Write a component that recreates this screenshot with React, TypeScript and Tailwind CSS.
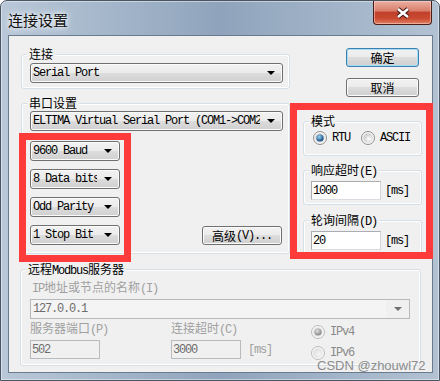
import type { ReactNode } from "react";

// SimSun-like half-width latin: 12px mono squeezed to a 6px advance
const mono = "font-['Liberation_Mono',monospace] tracking-[-1.2px]";
const btnBg = "bg-[linear-gradient(#f2f2f2,#ebebeb_49%,#dddddd_50%,#cfcfcf)]";

function Arrow({ color = "#000" }: { color?: string }) {
  return (
    <svg width="8" height="4" viewBox="0 0 8 4">
      <polygon points="0,0 8,0 4,4" fill={color} />
    </svg>
  );
}

function Combo({ text, className = "" }: { text: string; className?: string }) {
  return (
    <div
      className={`flex h-[20px] items-center rounded-[3px] border border-[#707070] ${btnBg} shadow-[inset_0_0_0_1px_#fbfbfb] ${className}`}
    >
      <div className={`min-w-0 flex-1 overflow-hidden whitespace-nowrap pl-[2px] leading-[12px] ${mono}`}>
        {text}
      </div>
      <div className="flex w-[22px] shrink-0 justify-center">
        <Arrow />
      </div>
    </div>
  );
}

function Btn({ children, def = false, className = "" }: { children: ReactNode; def?: boolean; className?: string }) {
  return (
    <button
      type="button"
      className={`flex h-[19px] items-center justify-center rounded-[3px] border leading-[12px] ${btnBg} ${
        def ? "border-[#3c7fb1] shadow-[inset_0_0_0_1px_#a6dcf6]" : "border-[#707070] shadow-[inset_0_0_0_1px_#fbfbfb]"
      } ${className}`}
    >
      {children}
    </button>
  );
}

function Input({ value, disabled = false, className = "" }: { value: string; disabled?: boolean; className?: string }) {
  return (
    <div
      className={`flex h-[19px] items-center border pl-[1px] leading-[12px] ${mono} ${
        disabled
          ? "border-[#b9bcbe] bg-[#f0f0f0] text-[#6d6d6d]"
          : "border-[#abadb3] border-b-[#d9dde3] border-r-[#d2d5db] bg-white text-black"
      } ${className}`}
    >
      {value}
    </div>
  );
}

function Radio({ id, checked = false, disabled = false }: { id: string; checked?: boolean; disabled?: boolean }) {
  const dot = disabled ? ["#e0e0e0", "#858585"] : ["#9ad8fb", "#0b4577"];
  return (
    <svg width="14" height="14" viewBox="0 0 14 14" className="shrink-0">
      <defs>
        <radialGradient id={`${id}w`} cx="60%" cy="60%" r="60%">
          <stop offset="0%" stopColor={disabled ? "#f6f6f6" : "#ffffff"} />
          <stop offset="100%" stopColor={disabled ? "#dedede" : "#c6c6c6"} />
        </radialGradient>
        <radialGradient id={`${id}d`} cx="40%" cy="35%" r="65%">
          <stop offset="0%" stopColor={dot[0]} />
          <stop offset="100%" stopColor={dot[1]} />
        </radialGradient>
      </defs>
      <circle cx="7" cy="7" r="6.5" fill="#f5f5f5" stroke={disabled ? "#bdbdbd" : "#8e8f8f"} />
      <circle cx="7" cy="7" r="4.6" fill={`url(#${id}w)`} />
      {checked && <circle cx="7" cy="7" r="3.6" fill={`url(#${id}d)`} />}
    </svg>
  );
}

function Group({ label, className = "", children }: { label: ReactNode; className?: string; children: ReactNode }) {
  return (
    <div className={`flex flex-col rounded-[3px] border border-[#d5dfe5] shadow-[inset_0_0_0_1px_#fff] ${className}`}>
      <div className="-mt-[7px] ml-[5px] w-fit bg-[#f0f0f0] px-[2px] leading-[12px] whitespace-nowrap">{label}</div>
      {children}
    </div>
  );
}

export default function App() {
  return (
    <div className="relative flex h-[381px] w-[440px] flex-col overflow-hidden rounded-t-[7px] border border-[#4a5563] bg-linear-to-r from-[#b9c8d8] via-[#8fa4bc] to-[#b2c2d3] font-['Noto_Sans_CJK_SC',sans-serif] text-[12px] text-black shadow-[inset_0_0_0_1px_rgba(255,255,255,0.45)]">
      {/* title bar */}
      <div className="flex h-[34px] shrink-0 items-start">
        <div className="ml-[7px] mt-[11px] text-[15px] leading-[15px] text-[#111] [text-shadow:0_0_8px_#fff,0_0_4px_#fff]">
          连接设置
        </div>
        <div className="ml-auto mr-[7px] flex h-[24px] w-[59px] items-center justify-center rounded-b-[4px] border border-t-0 border-[#4a1d17] bg-[linear-gradient(#eab0a2,#d97f6c_42%,#c2412c_50%,#c9482f_75%,#e08265)] shadow-[inset_0_0_0_1px_rgba(255,220,210,0.5)]">
          <svg width="16" height="12" viewBox="0 0 16 12">
            <path d="M3 2 L13 10 M13 2 L3 10" stroke="#3b1712" strokeWidth="4.6" />
            <path d="M3 2 L13 10 M13 2 L3 10" stroke="#fff" strokeWidth="2.6" />
          </svg>
        </div>
      </div>

      {/* client area */}
      <div className="relative ml-[7px] h-[338px] w-[425px] shrink-0 border border-[#6b7b8d] bg-[#f0f0f0]">
        <div className="flex items-start">
          {/* left column */}
          <div className="ml-[12px] flex w-[269px] flex-col">
            <Group label="连接" className="mt-[18px] pb-[5px]">
              <Combo text="Serial Port" className="ml-[8px] mr-[6px] mt-[3px]" />
            </Group>
            <Group label="串口设置" className="mt-[14px] pb-[8px]">
              <Combo text="ELTIMA Virtual Serial Port (COM1->COM2)" className="ml-[8px] mr-[6px] mt-[2px]" />
              <div className="mt-[10px] flex items-end">
                <div className="ml-[8px] flex w-[90px] flex-col gap-[8px]">
                  <Combo text="9600 Baud" />
                  <Combo text="8 Data bits" />
                  <Combo text="Odd Parity" />
                  <Combo text="1 Stop Bit" />
                </div>
                <Btn className="ml-auto mr-[7px] w-[80px]">
                  高级<span className={mono}>(V)...</span>
                </Btn>
              </div>
            </Group>
          </div>

          {/* right column */}
          <div className="ml-[13px] flex w-[119px] flex-col">
            <Btn def className="ml-[43px] mt-[12px] w-[73px]">
              确定
            </Btn>
            <Btn className="ml-[43px] mt-[11px] w-[73px]">取消</Btn>
            <Group label="模式" className="mt-[24px] pb-[10px]">
              <div className="ml-[9px] mt-[4px] flex h-[14px] items-center">
                <Radio id="rtu" checked />
                <span className={`ml-[5px] leading-[12px] ${mono}`}>RTU</span>
                <span className="ml-[11px]">
                  <Radio id="ascii" />
                </span>
                <span className={`ml-[5px] leading-[12px] ${mono}`}>ASCII</span>
              </div>
            </Group>
            <Group
              label={
                <>
                  响应超时<span className={mono}>(E)</span>
                </>
              }
              className="mt-[14px] pb-[4px]"
            >
              <div className="ml-[7px] mt-[3px] flex items-center">
                <Input value="1000" className="w-[70px]" />
                <span className={`ml-[4px] leading-[12px] ${mono}`}>[ms]</span>
              </div>
            </Group>
            <Group
              label={
                <>
                  轮询间隔<span className={mono}>(D)</span>
                </>
              }
              className="mt-[15px] pb-[4px]"
            >
              <div className="ml-[7px] mt-[3px] flex items-center">
                <Input value="20" className="w-[70px]" />
                <span className={`ml-[4px] leading-[12px] ${mono}`}>[ms]</span>
              </div>
            </Group>
          </div>
        </div>

        {/* remote server, disabled */}
        <Group
          label={
            <>
              远程<span className={mono}>Modbus</span>服务器
            </>
          }
          className="ml-[11px] mt-[14px] w-[401px] pb-[5px]"
        >
          <div className="ml-[11px] mt-[4px] leading-[12px] text-[#a0a0a0]">
            <span className={mono}>IP</span>地址或节点的名称<span className={mono}>(I)</span>
          </div>
          <div className="ml-[9px] mr-[10px] mt-[4px] flex h-[20px] items-center border border-[#b5b9bc] bg-[#f4f4f4]">
            <div className={`flex-1 pl-[2px] leading-[12px] text-[#6d6d6d] ${mono}`}>127.0.0.1</div>
            <div className="flex h-full w-[23px] items-center justify-center bg-[#f0f0f0]">
              <Arrow color="#707070" />
            </div>
          </div>
          <div className="mt-[3px] flex items-start">
            <div className="ml-[9px] flex w-[70px] flex-col">
              <div className="whitespace-nowrap leading-[12px] text-[#a0a0a0]">
                服务器端口<span className={mono}>(P)</span>
              </div>
              <Input value="502" disabled className="mt-[4px] w-[70px]" />
            </div>
            <div className="ml-[71px] flex w-[130px] flex-col">
              <div className="whitespace-nowrap leading-[12px] text-[#a0a0a0]">
                连接超时<span className={mono}>(C)</span>
              </div>
              <div className="mt-[4px] flex items-center">
                <Input value="3000" disabled className="w-[70px]" />
                <span className={`ml-[7px] leading-[12px] text-[#a0a0a0] ${mono}`}>[ms]</span>
              </div>
            </div>
            <div className="ml-[10px] flex flex-col">
              <div className="mt-[3px] flex items-center">
                <Radio id="v4" checked disabled />
                <span className={`ml-[5px] leading-[12px] text-[#8a8a8a] ${mono}`}>IPv4</span>
              </div>
              <div className="mt-[7px] flex items-center">
                <Radio id="v6" disabled />
                <span className={`ml-[5px] leading-[12px] text-[#8a8a8a] ${mono}`}>IPv6</span>
              </div>
            </div>
          </div>
        </Group>

        {/* red annotation frames */}
        <div className="absolute left-[10px] top-[97px] h-[129px] w-[112px] border-[7px] border-[#fe3b3b]" />
        <div className="absolute left-[281px] top-[67px] h-[156px] w-[143px] border-[7px] border-[#fe3b3b]" />
      </div>

      {/* watermark */}
      <div className="absolute left-[316px] top-[358px] font-['Liberation_Sans',sans-serif] text-[13px] leading-[13px] text-[#8c8c8c]">
        CSDN @zhouwl72
      </div>
    </div>
  );
}
